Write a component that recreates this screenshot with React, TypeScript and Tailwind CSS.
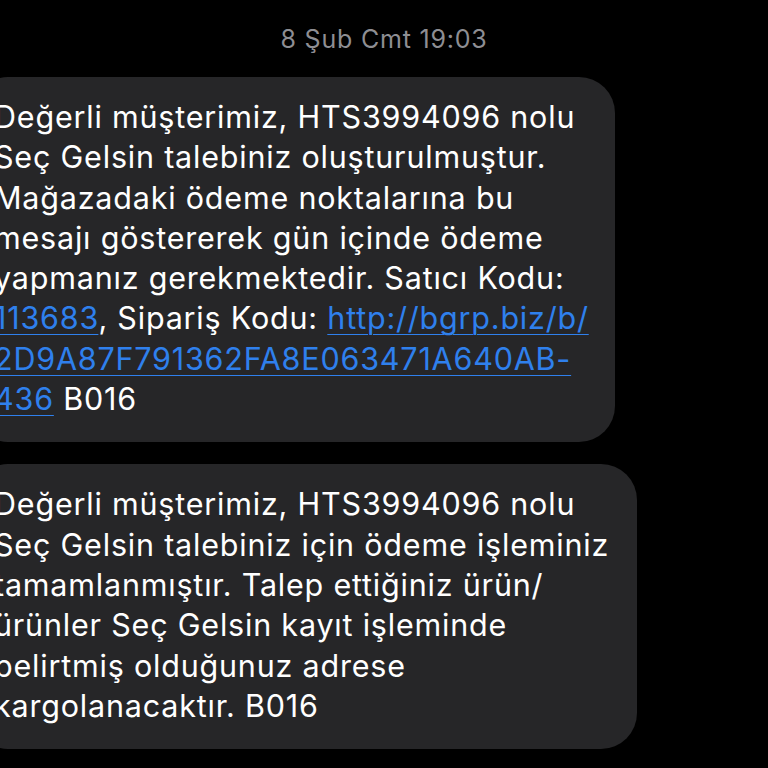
const LINK = 'text-[#2f80ed] underline decoration-1 underline-offset-[5px]'

function Bubble({ width, children }: { width: string; children: React.ReactNode }) {
  return (
    <div className={`-ml-[28px] ${width} rounded-[36px] bg-[#262628] pl-[22px] pr-4 pt-[20px] pb-[23px]`}>
      <div className="text-[30.5px] leading-[40.3px] tracking-[0.8px] text-white">{children}</div>
    </div>
  )
}

export default function App() {
  return (
    <div className="h-[768px] w-[768px] overflow-hidden bg-black font-['Inter',sans-serif]">
      <p className="pt-[24px] text-center text-[25px] leading-[30px] tracking-[0.8px] text-[#8e8e93]">
        8 Şub Cmt 19:03
      </p>

      <div className="mt-[23px] flex flex-col gap-[22px]">
        <Bubble width="w-[643px]">
          <div>Değerli müşterimiz, HTS3994096 nolu</div>
          <div>Seç Gelsin talebiniz oluşturulmuştur.</div>
          <div>Mağazadaki ödeme noktalarına bu</div>
          <div>mesajı göstererek gün içinde ödeme</div>
          <div>yapmanız gerekmektedir. Satıcı Kodu:</div>
          <div>
            <span className={LINK}>113683</span>, Sipariş Kodu:{' '}
            <span className={LINK}>http://bgrp.biz/b/</span>
          </div>
          <div>
            <span className={LINK}>2D9A87F791362FA8E063471A640AB-</span>
          </div>
          <div>
            <span className={LINK}>436</span> B016
          </div>
        </Bubble>

        <Bubble width="w-[665px]">
          <div>Değerli müşterimiz, HTS3994096 nolu</div>
          <div>Seç Gelsin talebiniz için ödeme işleminiz</div>
          <div>tamamlanmıştır. Talep ettiğiniz ürün/</div>
          <div>ürünler Seç Gelsin kayıt işleminde</div>
          <div>belirtmiş olduğunuz adrese</div>
          <div>kargolanacaktır. B016</div>
        </Bubble>
      </div>
    </div>
  )
}
